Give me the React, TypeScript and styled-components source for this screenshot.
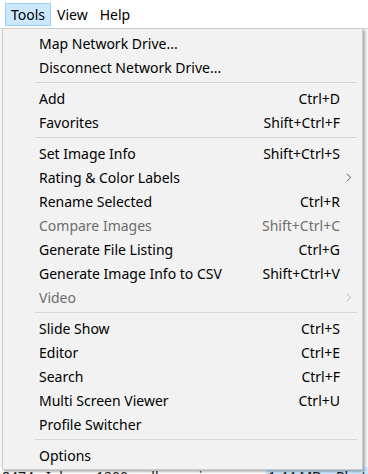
import React from 'react';
import styled, { createGlobalStyle } from 'styled-components';

const GlobalStyle = createGlobalStyle`
  html, body {
    margin: 0;
    padding: 0;
    background: #ffffff;
  }
  body {
    font-family: "Noto Sans", "Open Sans", sans-serif;
    font-size: 14px;
    color: #000;
  }
`;

type Item =
  | { kind: 'sep' }
  | { kind: 'item'; label: string; shortcut?: string; disabled?: boolean; submenu?: boolean };

const items: Item[] = [
  { kind: 'item', label: 'Map Network Drive...' },
  { kind: 'item', label: 'Disconnect Network Drive...' },
  { kind: 'sep' },
  { kind: 'item', label: 'Add', shortcut: 'Ctrl+D' },
  { kind: 'item', label: 'Favorites', shortcut: 'Shift+Ctrl+F' },
  { kind: 'sep' },
  { kind: 'item', label: 'Set Image Info', shortcut: 'Shift+Ctrl+S' },
  { kind: 'item', label: 'Rating & Color Labels', submenu: true },
  { kind: 'item', label: 'Rename Selected', shortcut: 'Ctrl+R' },
  { kind: 'item', label: 'Compare Images', shortcut: 'Shift+Ctrl+C', disabled: true },
  { kind: 'item', label: 'Generate File Listing', shortcut: 'Ctrl+G' },
  { kind: 'item', label: 'Generate Image Info to CSV', shortcut: 'Shift+Ctrl+V' },
  { kind: 'item', label: 'Video', submenu: true, disabled: true },
  { kind: 'sep' },
  { kind: 'item', label: 'Slide Show', shortcut: 'Ctrl+S' },
  { kind: 'item', label: 'Editor', shortcut: 'Ctrl+E' },
  { kind: 'item', label: 'Search', shortcut: 'Ctrl+F' },
  { kind: 'item', label: 'Multi Screen Viewer', shortcut: 'Ctrl+U' },
  { kind: 'item', label: 'Profile Switcher' },
  { kind: 'sep' },
  { kind: 'item', label: 'Options' },
];

const Window = styled.div`
  position: relative;
  width: 368px;
  height: 474px;
  overflow: hidden;
  background: #ffffff;
`;

const MenuBar = styled.div`
  display: flex;
  align-items: center;
  height: 28px;
  padding-left: 5px;
  background: #ffffff;
`;

const BarItem = styled.div<{ $active?: boolean }>`
  display: flex;
  align-items: center;
  height: 23px;
  margin-top: 1px;
  padding: 0 5px;
  box-sizing: border-box;
  border: 1px solid ${(p) => (p.$active ? '#99d1ff' : 'transparent')};
  background: ${(p) => (p.$active ? '#cce8ff' : 'transparent')};
  color: #000;
`;

const Backdrop = styled.div`
  display: flex;
  flex-direction: column;
  height: 459px;
  background: #f3f3f3;
`;

const BackFill = styled.div`
  flex: 1;
  border-top: 1px solid #d9d9d9;
`;

const BackRow = styled.div`
  display: flex;
  align-items: flex-start;
  height: 20px;
  background: #ffffff;
  color: #1a1a1a;
  white-space: nowrap;
`;

const BackCell = styled.span<{ $w: number; $sel?: boolean }>`
  width: ${(p) => p.$w}px;
  height: 100%;
  flex-shrink: 0;
  padding-left: 2px;
  background: ${(p) => (p.$sel ? '#cce8ff' : 'transparent')};
`;

const Menu = styled.div`
  position: absolute;
  left: 2px;
  top: 28px;
  width: 359px;
  padding: 2px 0 2px 0;
  background: #f2f2f2;
  border: 1px solid #cccccc;
  box-shadow: 2px 2px 2px rgba(0, 0, 0, 0.28);
`;

const Row = styled.div<{ $disabled?: boolean }>`
  display: flex;
  align-items: center;
  height: 24px;
  padding-left: 36px;
  color: ${(p) => (p.$disabled ? '#6d6d6d' : '#000000')};
`;

const Label = styled.span`
  flex: 1;
  white-space: nowrap;
`;

const Shortcut = styled.span`
  white-space: nowrap;
  text-align: right;
`;

const ArrowSlot = styled.span`
  display: flex;
  align-items: center;
  width: 22px;
  padding-left: 6px;
  box-sizing: border-box;
  height: 100%;
`;

const Separator = styled.div`
  height: 1px;
  margin: 3px 5px 3px 32px;
  background: #d7d7d7;
`;

const Chevron = ({ disabled }: { disabled?: boolean }) => (
  <svg width="6" height="9" viewBox="0 0 6 9">
    <path d="M1 0.8 L4.6 4.5 L1 8.2" fill="none" stroke={disabled ? '#b5b5b5' : '#5a5a5a'} strokeWidth="1" />
  </svg>
);

const App = () => {
  return (
    <>
      <GlobalStyle />
      <Window>
        <MenuBar>
          <BarItem $active>Tools</BarItem>
          <BarItem>View</BarItem>
          <BarItem>Help</BarItem>
        </MenuBar>
        <Backdrop>
          <BackFill />
          <BackRow>
            <BackCell $w={42}>8474</BackCell>
            <BackCell $w={220}>Iphony 1200-wallpaper.jpg</BackCell>
            <BackCell $w={66} $sel>1.44 MB</BackCell>
            <BackCell $w={40} $sel>Photo</BackCell>
          </BackRow>
        </Backdrop>
        <Menu>
          {items.map((it, i) =>
            it.kind === 'sep' ? (
              <Separator key={i} />
            ) : (
              <Row key={i} $disabled={it.disabled}>
                <Label>{it.label}</Label>
                {it.shortcut && <Shortcut>{it.shortcut}</Shortcut>}
                <ArrowSlot>{it.submenu && <Chevron disabled={it.disabled} />}</ArrowSlot>
              </Row>
            )
          )}
        </Menu>
      </Window>
    </>
  );
};

export default App;
